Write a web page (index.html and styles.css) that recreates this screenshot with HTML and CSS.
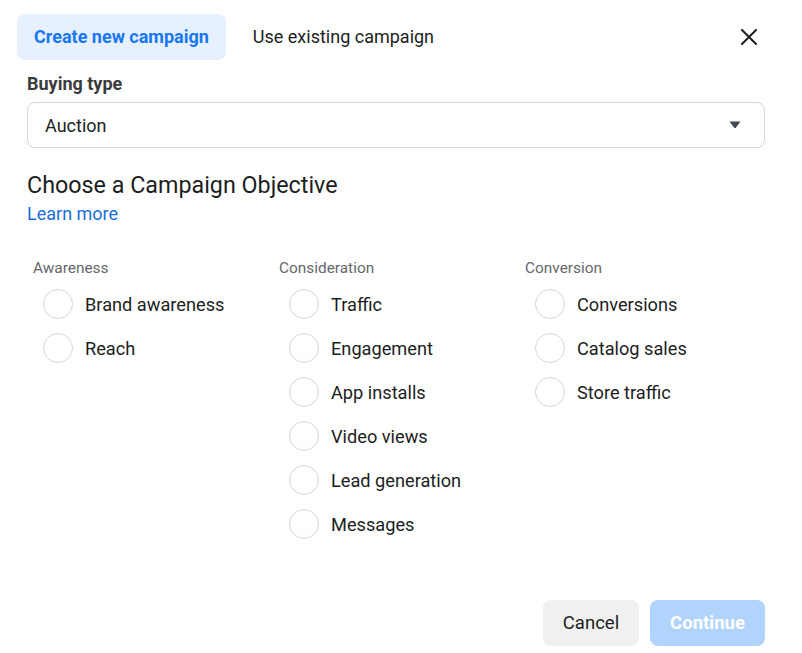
FILE: index.html
```html
<!DOCTYPE html>
<html lang="en">
<head>
    <meta charset="UTF-8">
    <meta name="viewport" content="width=device-width, initial-scale=1.0">
    <title>Create campaign</title>
    <link rel="stylesheet" href="styles.css">
</head>
<body>
    <div class="dialog">
        <div class="header">
            <div class="tabs">
                <div class="tab active">Create new campaign</div>
                <div class="tab">Use existing campaign</div>
            </div>
            <button class="close" aria-label="Close">
                <svg width="16" height="16" viewBox="0 0 16 16">
                    <path d="M1 1 L15 15 M15 1 L1 15" stroke="#1c1e21" stroke-width="2" stroke-linecap="round"/>
                </svg>
            </button>
        </div>

        <div class="label">Buying type</div>
        <div class="select">
            <span>Auction</span>
            <svg class="caret" width="12" height="8" viewBox="0 0 12 8">
                <path d="M0.5 0.5 H11.5 L7 6.5 Q6 7.5 5 6.5 Z" fill="#444950"/>
            </svg>
        </div>

        <h2 class="title">Choose a Campaign Objective</h2>
        <a class="learn" href="#">Learn more</a>

        <div class="columns">
            <div class="column">
                <div class="col-head">Awareness</div>
                <label class="option"><span class="radio"></span>Brand awareness</label>
                <label class="option"><span class="radio"></span>Reach</label>
            </div>
            <div class="column">
                <div class="col-head">Consideration</div>
                <label class="option"><span class="radio"></span>Traffic</label>
                <label class="option"><span class="radio"></span>Engagement</label>
                <label class="option"><span class="radio"></span>App installs</label>
                <label class="option"><span class="radio"></span>Video views</label>
                <label class="option"><span class="radio"></span>Lead generation</label>
                <label class="option"><span class="radio"></span>Messages</label>
            </div>
            <div class="column">
                <div class="col-head">Conversion</div>
                <label class="option"><span class="radio"></span>Conversions</label>
                <label class="option"><span class="radio"></span>Catalog sales</label>
                <label class="option"><span class="radio"></span>Store traffic</label>
            </div>
        </div>

        <div class="footer">
            <button class="btn cancel">Cancel</button>
            <button class="btn continue" disabled>Continue</button>
        </div>
    </div>
</body>
</html>
```

FILE: styles.css
```css
body {
    margin: 0;
    background-color: #fff;
    font-family: Roboto, "Liberation Sans", Arial, sans-serif;
    color: #1c1e21;
}
.dialog {
    padding: 14px 37px 0 27px;
}
.header {
    display: flex;
    justify-content: space-between;
    align-items: center;
    height: 46px;
}
.tabs {
    display: flex;
    gap: 10px;
    margin-left: -10px;
}
.tab {
    height: 46px;
    line-height: 46px;
    padding: 0 17px;
    border-radius: 8px;
    font-size: 18px;
    color: #1c1e21;
}
.tab.active {
    background-color: #e7f0fd;
    color: #1877f2;
    font-weight: bold;
}
.close {
    width: 32px;
    height: 32px;
    border: none;
    background: none;
    padding: 0;
    display: flex;
    justify-content: center;
    align-items: center;
    cursor: pointer;
}
.label {
    margin-top: 14px;
    font-size: 18px;
    line-height: 20px;
    font-weight: bold;
    color: #3a3b3c;
}
.select {
    margin-top: 8px;
    height: 46px;
    box-sizing: border-box;
    border: 1px solid #d8d8d8;
    border-radius: 8px;
    display: flex;
    align-items: center;
    justify-content: space-between;
    padding: 0 23px 0 17px;
    font-size: 18px;
    color: #1c1e21;
}
.title {
    margin: 23px 0 0;
    font-size: 23.3px;
    line-height: 28px;
    font-weight: normal;
    color: #1c1e21;
}
.learn {
    display: block;
    margin-top: 4px;
    font-size: 18px;
    line-height: 22px;
    color: #1a6ed8;
    text-decoration: none;
}
.columns {
    display: grid;
    grid-template-columns: 246px 246px 246px;
    margin-top: 34px;
}
.col-head {
    padding-left: 6px;
    font-size: 15.4px;
    line-height: 18px;
    color: #65676b;
    margin-bottom: 12px;
}
.option {
    display: flex;
    align-items: center;
    height: 30px;
    margin-bottom: 14px;
    padding-left: 16px;
    font-size: 18.2px;
    color: #1c1e21;
}
.radio {
    width: 30px;
    height: 30px;
    box-sizing: border-box;
    border: 1px solid #d6d6d6;
    border-radius: 50%;
    margin-right: 12px;
}
.footer {
    display: flex;
    justify-content: flex-end;
    gap: 11px;
    margin-top: 47px;
}
.btn {
    height: 46px;
    border: none;
    border-radius: 8px;
    font-family: Roboto, "Liberation Sans", Arial, sans-serif;
    font-size: 18.5px;
    padding: 0;
}
.cancel {
    width: 96px;
    background-color: #f0f0f0;
    color: #1c1e21;
}
.continue {
    width: 115px;
    background-color: #b0d4fc;
    color: #fff;
    font-weight: bold;
}
```
